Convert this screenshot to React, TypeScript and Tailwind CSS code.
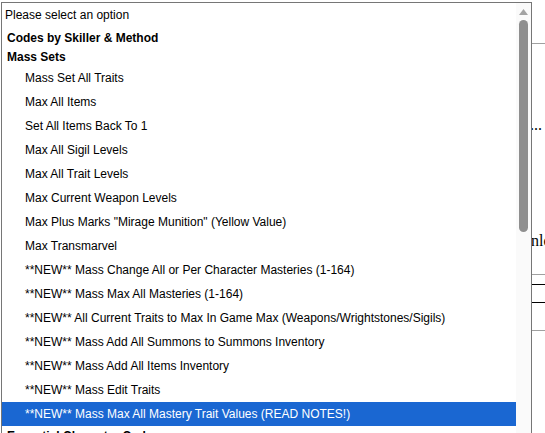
const groups = [
  {
    label: "Mass Sets",
    options: [
      "Mass Set All Traits",
      "Max All Items",
      "Set All Items Back To 1",
      "Max All Sigil Levels",
      "Max All Trait Levels",
      "Max Current Weapon Levels",
      'Max Plus Marks "Mirage Munition" (Yellow Value)',
      "Max Transmarvel",
      "**NEW** Mass Change All or Per Character Masteries (1-164)",
      "**NEW** Mass Max All Masteries (1-164)",
      "**NEW** All Current Traits to Max In Game Max (Weapons/Wrightstones/Sigils)",
      "**NEW** Mass Add All Summons to Summons Inventory",
      "**NEW** Mass Add All Items Inventory",
      "**NEW** Mass Edit Traits",
      "**NEW** Mass Max All Mastery Trait Values (READ NOTES!)",
    ],
  },
];

const selected = "**NEW** Mass Max All Mastery Trait Values (READ NOTES!)";

const Page = () => (
  <div className="flex flex-col font-['Liberation_Serif',serif] text-[16px] text-black">
    <div className="h-[43px]"></div>
    <div className="border-t border-[#a0a0a0] ml-[300px]"></div>
    <div className="h-[72px]"></div>
    <p className="pl-[523px] whitespace-nowrap leading-[18px]">e...</p>
    <div className="h-[98px]"></div>
    <p className="pl-[500px] whitespace-nowrap leading-[18px]">Download</p>
    <div className="h-[24px]"></div>
    <div className="border-t border-[#a0a0a0] ml-[300px]"></div>
    <div className="h-[9px]"></div>
    <div className="border-t border-black ml-[300px]"></div>
    <div className="h-[17px]"></div>
    <div className="border-t border-black ml-[300px]"></div>
    <div className="h-[27px]"></div>
    <div className="border-t border-[#a0a0a0] ml-[300px]"></div>
  </div>
);

const Dropdown = () => (
  <div className="absolute left-[1px] top-[2px] w-[531px] h-[520px] border border-[#767676] bg-white flex font-['Liberation_Sans',Arial,sans-serif] text-[12px] text-black">
    <div className="flex-1 flex flex-col">
      <div className="h-[24px] flex items-center pl-[3px]">Please select an option</div>
      <div className="h-[21px] flex items-center pl-[5px] font-bold">Codes by Skiller &amp; Method</div>
      {groups.map((g) => (
        <div key={g.label} className="flex flex-col">
          <div className="h-[18px] flex items-center pl-[5px] font-bold">{g.label}</div>
          {g.options.map((o) => (
            <div
              key={o}
              className={
                o === selected
                  ? "h-[24px] flex items-center pl-[23px] bg-[#1a67d2] text-white whitespace-nowrap"
                  : "h-[24px] flex items-center pl-[23px] whitespace-nowrap"
              }
            >
              {o}
            </div>
          ))}
        </div>
      ))}
      <div className="h-[19px] flex items-center pl-[5px] font-bold">Essential Character Codes</div>
    </div>
    <div className="w-[15px] bg-[#fafafa] flex flex-col items-center">
      <svg width="9" height="6" viewBox="0 0 9 6" className="mt-[6px]">
        <polygon points="4.5,0 9,6 0,6" fill="#a3a3a3" />
      </svg>
      <div className="mt-[5px] w-[9px] h-[212px] rounded-full bg-[#8f8f8f]"></div>
    </div>
  </div>
);

export default function App() {
  return (
    <div className="relative w-[545px] h-[433px] overflow-hidden bg-white">
      <Page />
      <Dropdown />
    </div>
  );
}
